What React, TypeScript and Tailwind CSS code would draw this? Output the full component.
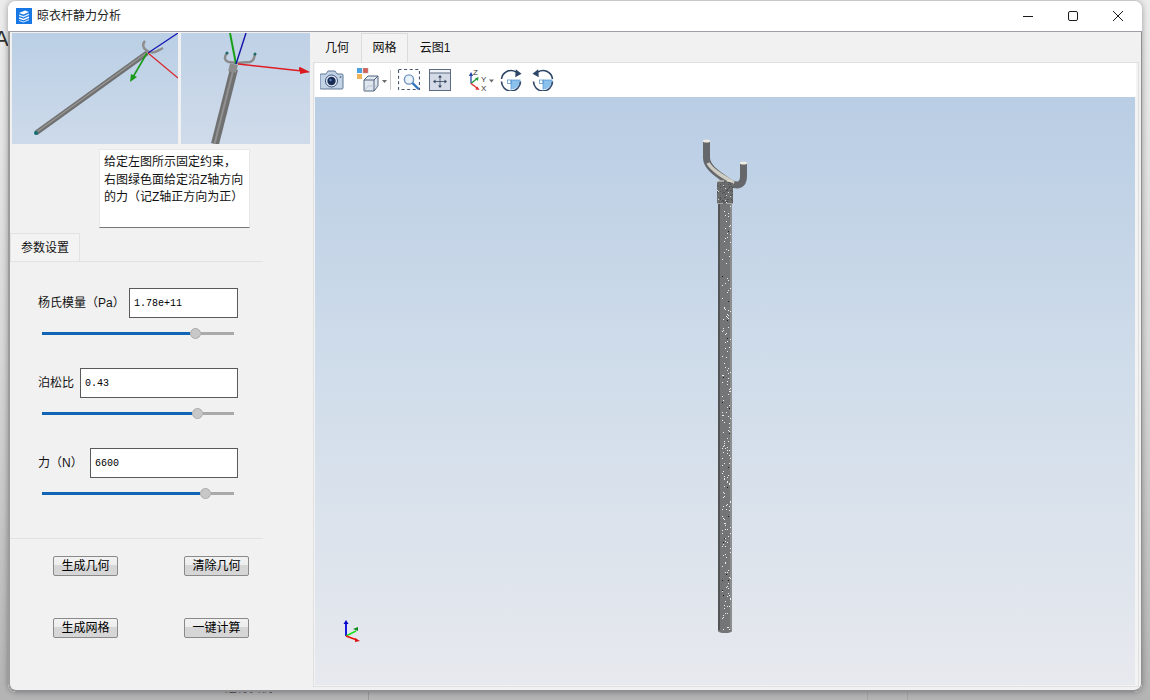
const dots: { x: number; y: number; dark: boolean }[] = [];
let seed = 7;
const rnd = () => {
  seed = (seed * 16807) % 2147483647;
  return seed / 2147483647;
};
for (let y = 206; y < 630; y += 2) {
  const n = y > 300 ? 2 : 1;
  for (let i = 0; i < n; i++) {
    if (rnd() < 0.62) dots.push({ x: 722 + Math.floor(rnd() * 9), y: y + Math.floor(rnd() * 2), dark: rnd() < 0.1 });
  }
}
// speckle on the collar and the curved fork
const specks: { x: number; y: number; light: boolean }[] = [];
for (let i = 0; i < 70; i++) {
  const t = rnd();
  specks.push({ x: 717 + Math.floor(t * 16), y: 182 + Math.floor(rnd() * 21), light: rnd() < 0.15 });
}

const AppIcon = () => (
  <svg width="16" height="16" viewBox="0 0 16 16" className="shrink-0">
    <rect width="16" height="16" fill="#1677e5" />
    <path d="M3 5l6-2.500L13 4 7.500 6.500z" fill="#fff" />
    <path d="M3 6.500l4.500 1.500L13 5.500v1.600L7.500 9.400 3 8z" fill="#dcecff" />
    <path d="M3 9.200l4.500 1.500 5.500-2.400v1.600l-5.500 2.400L3 10.800z" fill="#fff" />
    <path d="M3 12l4.500 1.500L13 11v1.200l-5.500 2.200L3 13z" fill="#cfe4ff" />
  </svg>
);

const WindowControls = () => (
  <div className="flex items-center">
    <svg width="12" height="12" viewBox="0 0 12 12" className="mr-[33px]">
      <path d="M1 6.500h10" stroke="#1a1a1a" strokeWidth="1" />
    </svg>
    <svg width="12" height="12" viewBox="0 0 12 12" className="mr-[33px]">
      <rect x="1.500" y="1.500" width="9" height="9" rx="1.500" fill="none" stroke="#1a1a1a" strokeWidth="1" />
    </svg>
    <svg width="12" height="12" viewBox="0 0 12 12" className="mr-[18px]">
      <path d="M1 1l10 10M11 1L1 11" stroke="#1a1a1a" strokeWidth="1" />
    </svg>
  </div>
);

const ThumbLeft = () => (
  <svg width="166" height="111" viewBox="0 0 166 111" className="shrink-0">
    <defs>
      <linearGradient id="sky1" x1="0" y1="0" x2="0" y2="1">
        <stop offset="0" stopColor="#bacfe5" />
        <stop offset="1" stopColor="#cddaea" />
      </linearGradient>
    </defs>
    <rect width="166" height="111" fill="url(#sky1)" />
    <path d="M24 100L135 20" stroke="#707070" strokeWidth="5" />
    <path d="M24 99.500L135 19.500" stroke="#969694" strokeWidth="1.500" />
    <circle cx="24" cy="100" r="2" fill="#126f6f" />
    <path d="M133 8c-3 3-2 7 1 9 2 2 6 3 9 2 3-1 4-2 8-4" fill="none" stroke="#8d8d8d" strokeWidth="2.500" />
    <path d="M136 20L166 0" stroke="#1313b0" strokeWidth="1.200" />
    <path d="M136 20L166 45" stroke="#d8252b" strokeWidth="1.200" />
    <path d="M135 20L121 44" stroke="#199a19" strokeWidth="1.600" />
    <path d="M118 49l1-8 6 3z" fill="#1a9a1a" />
  </svg>
);

const ThumbRight = () => (
  <svg width="129" height="111" viewBox="0 0 129 111" className="shrink-0 ml-[3px]">
    <defs>
      <linearGradient id="sky2" x1="0" y1="0" x2="0" y2="1">
        <stop offset="0" stopColor="#bfd1e6" />
        <stop offset="1" stopColor="#cfdbea" />
      </linearGradient>
    </defs>
    <rect width="129" height="111" fill="url(#sky2)" />
    <path d="M53 36L34 111" stroke="#707070" strokeWidth="8" />
    <path d="M52 38L33.500 111" stroke="#919191" strokeWidth="2" />
    <rect x="48" y="31" width="8" height="8" fill="#8d8d8d" transform="rotate(14 52 35)" />
    <path d="M46 20c-3 4-3 8 2 9l8 1 13-1c4-1 4-4 5-8" fill="none" stroke="#8b8b8b" strokeWidth="2.500" />
    <circle cx="46" cy="20" r="1.500" fill="#1e6a6a" />
    <circle cx="74" cy="21" r="1.500" fill="#1e6a6a" />
    <path d="M55 31L49 0" stroke="#18a018" strokeWidth="2" />
    <path d="M55 31L65 0" stroke="#1212a8" strokeWidth="1.400" />
    <path d="M57 31l64 7" stroke="#e01c22" strokeWidth="1.400" />
    <path d="M129 40l-11-3 0-3z" fill="#d81b20" />
    <path d="M119 34l10 5-10 2z" fill="#d81b20" />
  </svg>
);

const Slider = ({ blue }: { blue: number }) => (
  <div className="flex items-center w-[192px] ml-[32px] mt-[10px] h-[10px]">
    <div className="h-[3px] bg-[#1264b5]" style={{ width: blue }} />
    <div className="w-[11px] h-[11px] rounded-full bg-[#c8c8c8] border border-[#ababab] shrink-0" />
    <div className="h-[3px] flex-1 bg-[#aaaaaa]" />
  </div>
);

const Field = ({ label, labelClass, value, blue }: { label: string; labelClass: string; value: string; blue: number }) => (
  <div className="mb-[30px]">
    <div className="flex items-center ml-[28px] w-[200px] h-[30px]">
      <div className={`${labelClass} shrink-0 text-xs text-[#111]`}>{label}</div>
      <div className="flex-1 h-[30px] bg-white border border-[#5a5a5a] pl-1 flex items-center text-[10px] text-black font-['Liberation_Mono','DejaVu_Sans_Mono',monospace]">
        {value}
      </div>
    </div>
    <Slider blue={blue} />
  </div>
);

const Btn = ({ label }: { label: string }) => (
  <button className="w-[65px] h-[20px] rounded-[2px] border border-[#8a8a8a] bg-[linear-gradient(#f2f2f2_0%,#ededed_45%,#d6d6d6_46%,#d6d6d6_100%)] text-xs leading-none text-black flex items-center justify-center">
    {label}
  </button>
);

const LeftPanel = () => (
  <div className="w-[303px] shrink-0">
    <div className="flex pl-[2px] pt-px w-[320px]">
      <ThumbLeft />
      <ThumbRight />
    </div>
    <div className="ml-[89px] mt-[5px] w-[151px] h-[79px] bg-white border-b border-b-[#777] border-x border-x-[#e8e8e8] border-t border-t-[#e8e8e8] pl-1 pt-[4px] text-xs leading-[17.5px] text-[#111]">
      给定左图所示固定约束，
      <br />
      右图绿色面给定沿Z轴方向
      <br />
      的力（记Z轴正方向为正）
    </div>
    <div className="mt-[5px] w-[70px] h-[28px] border border-b-0 border-[#e2e2e2] bg-[#f3f3f3] flex items-center justify-center text-xs text-[#111]">
      参数设置
    </div>
    <div className="w-[253px] border-t border-[#e2e2e2] pt-[26px] h-[277px]">
      <Field label="杨氏模量（Pa）" labelClass="w-[91px]" value="1.78e+11" blue={148} />
      <Field label="泊松比" labelClass="w-[42px]" value="0.43" blue={150} />
      <Field label="力（N）" labelClass="w-[52px]" value="6600" blue={158} />
    </div>
    <div className="w-[253px] border-t border-[#e2e2e2] pt-[17px] pl-[43px] grid grid-cols-[65px_65px] gap-x-[66px] gap-y-[42px]">
      <Btn label="生成几何" />
      <Btn label="清除几何" />
      <Btn label="生成网格" />
      <Btn label="一键计算" />
    </div>
  </div>
);

const CameraIcon = () => (
  <svg width="24" height="20" viewBox="0 0 24 20" className="shrink-0">
    <path d="M1 4h5l2-3h7l2 3h5a1 1 0 011 1v13a1 1 0 01-1 1H1a1 1 0 01-1-1V5a1 1 0 011-1z" fill="#c3d2e4" stroke="#5f7896" strokeWidth="1" />
    <circle cx="11.500" cy="11" r="6" fill="#e6edf5" stroke="#38557d" strokeWidth="1" />
    <circle cx="11.500" cy="11" r="4.200" fill="#182c56" />
    <circle cx="10.500" cy="10" r="1.200" fill="#5c7fb4" />
    <circle cx="20.500" cy="7" r="0.900" fill="#5f7896" />
  </svg>
);

const ViewCubeIcon = () => (
  <svg width="30" height="24" viewBox="0 0 30 24" className="shrink-0 ml-[13px]">
    <rect x="0" y="0" width="5" height="5" fill="#4aa3e0" />
    <rect x="6" y="0" width="5" height="5" fill="#d4605a" stroke="#b9a0a0" strokeWidth="0.500" />
    <rect x="0" y="6" width="5" height="5" fill="#f0b458" />
    <path d="M7 12l4-4h10v10l-4 5H7z" fill="#dfe6ee" stroke="#51647e" strokeWidth="1" />
    <path d="M7 12h10v11M17 12l4-4" fill="none" stroke="#51647e" strokeWidth="1" />
    <path d="M7 23l4-5h10" fill="none" stroke="#a9b6c6" strokeWidth="0.700" />
    <path d="M25 12h5l-2.500 3z" fill="#6a6a6a" />
  </svg>
);

const ZoomBoxIcon = () => (
  <svg width="22" height="22" viewBox="0 0 22 22" className="shrink-0 ml-[7px]">
    <rect x="0.500" y="0.500" width="21" height="20" fill="none" stroke="#46576f" strokeWidth="1.200" strokeDasharray="3 2.600" />
    <circle cx="11" cy="10.500" r="4.600" fill="#eaf2fa" stroke="#6f93bd" strokeWidth="1.400" />
    <path d="M14.500 14l6 6" stroke="#2e74c0" strokeWidth="2.400" />
  </svg>
);

const PanBoxIcon = () => (
  <svg width="22" height="22" viewBox="0 0 22 22" className="shrink-0 ml-[9px]">
    <rect x="0.500" y="0.500" width="21" height="21" fill="#d4dbe6" stroke="#5b6b82" strokeWidth="1" />
    <rect x="1" y="1" width="20" height="3" fill="#eef1f5" />
    <path d="M1 4h20" stroke="#5b6b82" strokeWidth="1" />
    <path d="M11 6l2 2.500H9zM11 19l2-2.500H9zM4 12.500L6.500 10.500v4zM18 12.500L15.500 10.500v4z" fill="#33465f" />
    <path d="M11 8v9M6 12.500h10" stroke="#33465f" strokeWidth="0.800" />
  </svg>
);

const AxesIcon = () => (
  <svg width="30" height="24" viewBox="0 0 30 24" className="shrink-0 ml-[15px]">
    <path d="M5 15.500V7" stroke="#2548a8" strokeWidth="1.300" />
    <path d="M5 4l2.200 4H2.800z" fill="#2548a8" />
    <path d="M5 15.500l5.500-4.500" stroke="#1f9a38" strokeWidth="1.300" />
    <path d="M12.500 9l-.5 4-3-2.500z" fill="#1f9a38" />
    <path d="M5 15.500l6 4.500" stroke="#e02a2a" strokeWidth="1.300" />
    <path d="M13.500 22l-4.200-.5 2-3z" fill="#e02a2a" />
    <text x="7" y="7" fontSize="8" fill="#333" fontFamily="Liberation Sans, sans-serif">Z</text>
    <text x="15" y="14" fontSize="8" fill="#333" fontFamily="Liberation Sans, sans-serif">Y</text>
    <text x="15" y="23" fontSize="8" fill="#333" fontFamily="Liberation Sans, sans-serif">X</text>
    <path d="M23 11.500h5l-2.500 3z" fill="#6a6a6a" />
  </svg>
);

const RotateIcon = ({ ccw }: { ccw?: boolean }) => (
  <svg width="22" height="22" viewBox="0 0 22 22" className={ccw ? "shrink-0 ml-[10px]" : "shrink-0 ml-[4px]"}>
    <path d="M11 11V20.500A9.500 9.500 0 0020.500 11z" fill="#8cc0ec" />
    <rect x="7.500" y="11" width="3.500" height="3.500" fill="#fff" stroke="#4a8ccb" strokeWidth="0.700" />
    <path d="M11 11V20.500M11 11H20.500" stroke="#4a8ccb" strokeWidth="0.700" />
    {ccw ? (
      <>
        <path d="M6 3A9.500 9.500 0 0120.500 10" fill="none" stroke="#2d4566" strokeWidth="1.600" />
        <path d="M1.500 12.500A9.500 9.500 0 0020.500 12.500" fill="none" stroke="#2d4566" strokeWidth="1.600" />
        <path d="M6.200 0.200L0.500 4.800l6.300 3.400z" fill="#2d4566" />
      </>
    ) : (
      <>
        <path d="M1.500 10A9.500 9.500 0 0116 3" fill="none" stroke="#2d4566" strokeWidth="1.600" />
        <path d="M1.500 12.500A9.500 9.500 0 0020.500 12.500" fill="none" stroke="#2d4566" strokeWidth="1.600" />
        <path d="M15.800 0.200l5.700 4.600-6.300 3.400z" fill="#2d4566" />
      </>
    )}
  </svg>
);

const Toolbar = () => (
  <div className="h-[34px] bg-white flex items-center pl-[5px] mr-[2px]">
    <CameraIcon />
    <ViewCubeIcon />
    <div className="w-px h-[20px] bg-[#c8c8c8] ml-[3px]" />
    <ZoomBoxIcon />
    <PanBoxIcon />
    <AxesIcon />
    <RotateIcon />
    <RotateIcon ccw />
  </div>
);

const Viewport = () => (
  <div className="h-[588px] mr-[3px] bg-[linear-gradient(#b9cde4_0%,#cfdcea_45%,#e7e9ee_100%)] overflow-hidden">
    <svg width="820" height="588" viewBox="315 97 820 588" className="block">
      <path d="M706.500 142V158C707 168 718 174 731 183.500C737 186 743.500 186 743.500 176V164" fill="none" stroke="#65676a" strokeWidth="7" />
      <path d="M708 163C712 170 722 176 734 183" fill="none" stroke="#cfcdc3" strokeWidth="3.500" />
      <ellipse cx="706.500" cy="141" rx="3.500" ry="1.500" fill="#f0ece2" />
      <ellipse cx="743.500" cy="163" rx="3.500" ry="1.500" fill="#f0ece2" />
      <path d="M717 183Q717 180 722 180L733 183V204H717z" fill="#6b6d6f" />
      <path d="M717 181h7M727 181h5M717 204h6M726 204h7" stroke="#e6e3d8" strokeWidth="1" />
      <rect x="718" y="204" width="14" height="427" fill="#737577" />
      <rect x="718" y="204" width="2" height="427" fill="#515355" />
      <rect x="730" y="204" width="2" height="427" fill="#8b8d8e" />
      <ellipse cx="725" cy="631" rx="7" ry="2" fill="#737577" />
      <g shapeRendering="crispEdges">
        {specks.map((d, i) => (
          <rect key={i} x={d.x} y={d.y} width="1" height="1" fill={d.light ? "#d8d8d8" : "#4f5153"} />
        ))}
        {dots.map((d, i) => (
          <rect key={i} x={d.x} y={d.y} width="1" height="1" fill={d.dark ? "#1d1d1d" : "#eeeeee"} />
        ))}
      </g>
      <g transform="translate(345 620)">
        <path d="M1 16V3" stroke="#0000e0" strokeWidth="1.800" />
        <path d="M-1.500 4L1 0l2.500 4z" fill="#0000c8" />
        <path d="M1 16l10-5" stroke="#18e018" strokeWidth="1.500" />
        <path d="M8 9l5-2v4z" fill="#0f8a1f" />
        <path d="M1 16l11 4" stroke="#e81010" strokeWidth="1.800" />
        <path d="M10 18l5 3-5 1z" fill="#d81010" />
      </g>
    </svg>
  </div>
);

const RightPanel = () => (
  <div className="flex-1 min-w-0 pt-px">
    <div className="flex h-[29px] text-xs text-[#111]">
      <div className="w-[48px] flex items-center justify-center">几何</div>
      <div className="w-[47px] flex items-center justify-center border border-b-0 border-[#dcdcdc] bg-[#f3f3f3]">网格</div>
      <div className="w-[54px] flex items-center justify-center">云图1</div>
    </div>
    <div className="w-[826px] h-[625px] border border-[#e0e0e0] pl-px bg-[#f3f3f3]">
      <Toolbar />
      <Viewport />
    </div>
  </div>
);

export default function App() {
  return (
    <div className="relative w-[1150px] h-[700px] overflow-hidden bg-[linear-gradient(#ececec_0%,#d8d8d8_50%,#b4b4b4_100%)] font-['Liberation_Sans','Noto_Sans_CJK_SC',sans-serif]">
      <div className="absolute left-[-6px] top-[22px] text-[22px] text-[#333]">AI</div>
      <div className="absolute left-[225px] top-[680px] text-xs text-[#555]">运行实例 ▾</div>
      <div className="absolute left-[368px] top-[692px] w-px h-2 bg-[#999]" />
      <div className="absolute left-[867px] top-[692px] w-px h-2 bg-[#a5a5a5]" />
      <div className="absolute left-[907px] top-[692px] w-px h-2 bg-[#a5a5a5]" />
      <div className="relative ml-2 mt-px w-[1134px] h-[691px] rounded-lg bg-[#f1f1f1] shadow-[0_0_6px_rgba(0,0,0,0.35)] overflow-hidden">
        <div className="h-[30px] bg-white border-b border-b-[#a0a0a8] box-content flex items-center justify-between pl-2">
          <div className="flex items-center gap-[5px] text-xs text-[#222]">
            <AppIcon />
            <span>晾衣杆静力分析</span>
          </div>
          <WindowControls />
        </div>
        <div className="flex h-[660px] border-l-2 border-r border-b-2 border-l-[#9c9c9c] border-r-[#8f8f94] border-b-[#8f8f94] rounded-b-lg">
          <LeftPanel />
          <RightPanel />
        </div>
      </div>
    </div>
  );
}
